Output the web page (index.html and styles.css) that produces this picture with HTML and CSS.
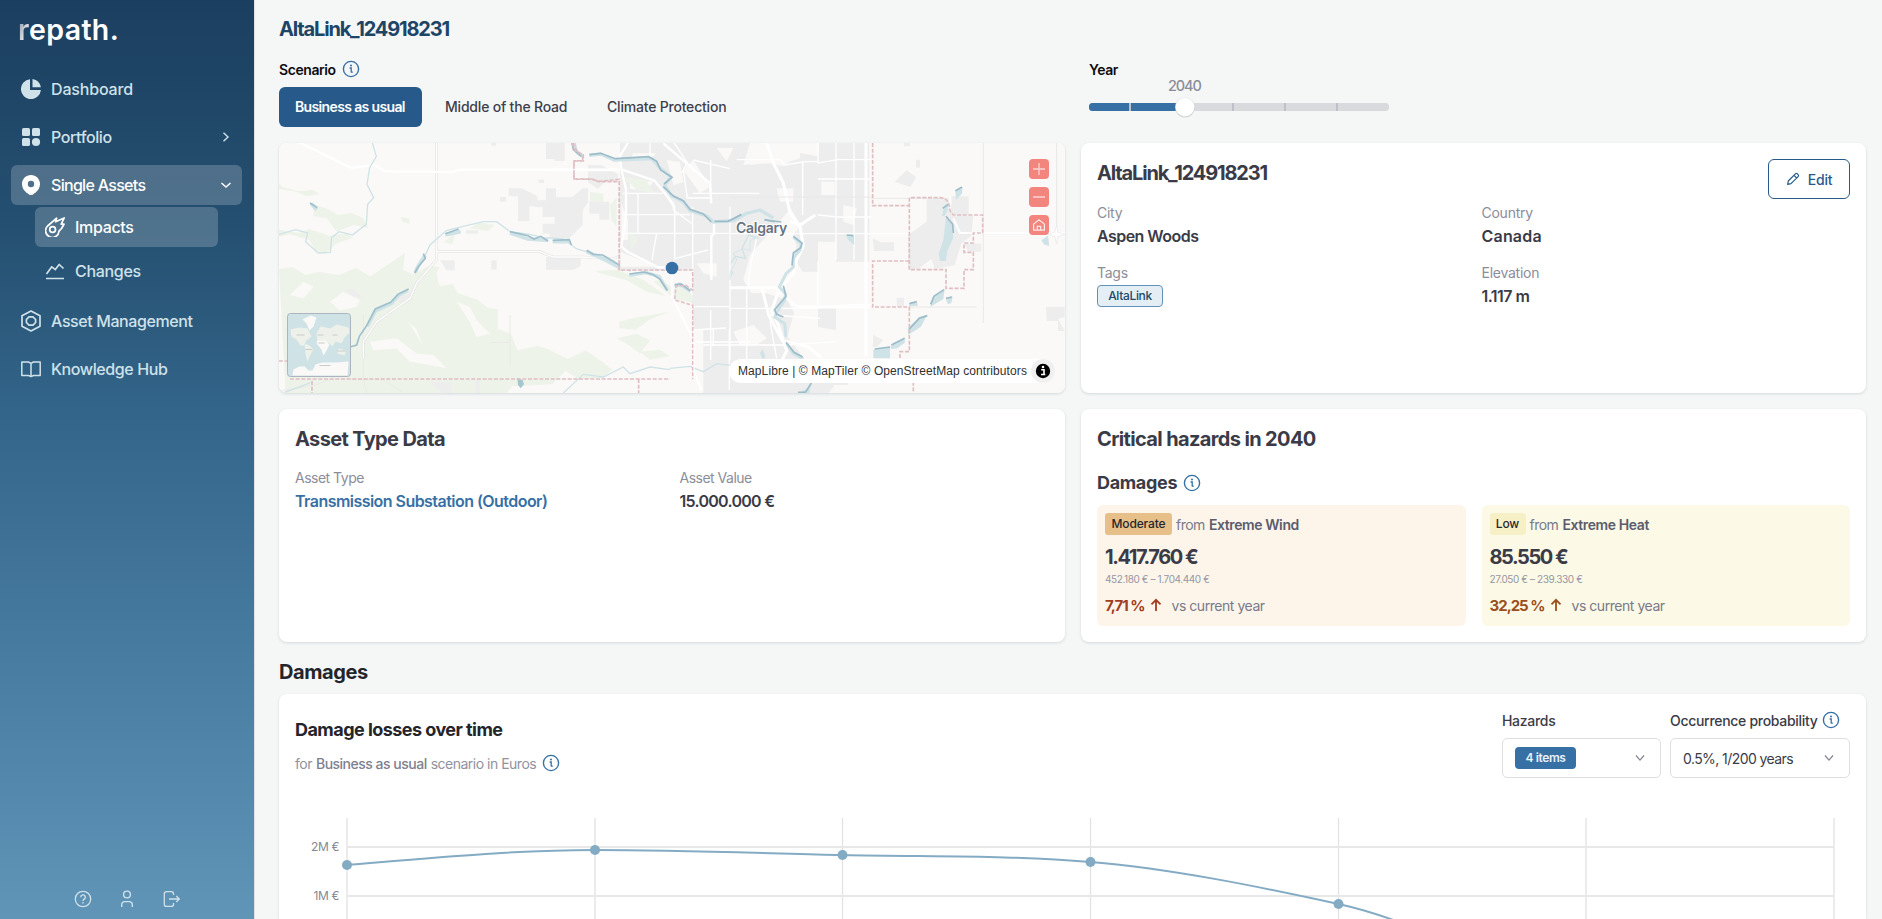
FILE: index.html
```html
<!DOCTYPE html>
<html lang="en">
<head>
<meta charset="utf-8">
<title>repath – AltaLink_124918231</title>
<link rel="stylesheet" href="styles.css">
</head>
<body>
<svg width="0" height="0" class="defs">
  <symbol id="info" viewBox="0 0 18 18"><circle cx="9" cy="9" r="7.6" fill="none" stroke="currentColor" stroke-width="1.4"/><path d="M7.600 8h1.600v4.500M9 12.200h1.800" fill="none" stroke="currentColor" stroke-width="1.300"/><circle cx="9" cy="5.500" r="1" fill="currentColor"/></symbol>
  <symbol id="up" viewBox="0 0 12 14"><path d="M6 13V2M1.5 6.3L6 1.8l4.5 4.5" fill="none" stroke="currentColor" stroke-width="1.8"/></symbol>
  <symbol id="down" viewBox="0 0 10 8"><path d="M1 1.5l4 4.6 4-4.6" fill="none" stroke="currentColor" stroke-width="1.2"/></symbol>
</svg>
<div class="app">
  <aside class="sidebar">
    <div class="logo"><span class="logo-r">r</span><span>epath.</span></div>
    <nav class="nav">
      <a class="item dash"><svg class="ico" viewBox="0 0 20 20"><path d="M9 0.2A10 10 0 1 0 19.9 11H9z" fill="currentColor"/><path d="M11.500 0v8.300h8.300C19.300 4 16 .7 11.500 0z" fill="currentColor"/></svg><span>Dashboard</span></a>
      <a class="item"><svg class="ico" viewBox="0 0 20 20" fill="currentColor"><rect x="1" y="1" width="8" height="8" rx="1.6"/><rect x="11" y="1" width="8" height="8" rx="1.6"/><rect x="1" y="11" width="8" height="8" rx="1.6"/><circle cx="15" cy="15" r="4.1"/></svg><span>Portfolio</span><svg class="caret" viewBox="0 0 12 12"><path d="M3.5 1.8L8 6l-4.500 4.200" fill="none" stroke="currentColor" stroke-width="1.4"/></svg></a>
      <a class="item active single"><svg class="ico" viewBox="0 0 20 20"><path fill="currentColor" fill-rule="evenodd" d="M10 0c5 0 9 4 9 8.900 0 4.500-3 7.500-5.500 9.400-1.200.9-2.200 2-3.500 2s-2.300-1.100-3.500-2C4 16.400 1 13.400 1 8.900 1 4 5 0 10 0zm0 5.800a3.200 3.200 0 1 0 0 6.400 3.200 3.200 0 0 0 0-6.400z"/></svg><span>Single Assets</span><svg class="caret" viewBox="0 0 12 12"><path d="M1.500 4l4.500 4 4.500-4" fill="none" stroke="currentColor" stroke-width="1.500"/></svg></a>
      <a class="item sub active"><svg class="ico" viewBox="0 0 20 20" fill="none" stroke="currentColor" stroke-width="1.700" stroke-linejoin="round"><path d="M2.600 9L11.600 1.200 10.600 4.800 19.200 .9 16.200 7.200 19 7.200 16.500 11.500 14 14.200A6.700 6.700 0 1 1 2.600 9z"/><circle cx="7.600" cy="12.500" r="2.900"/></svg><span>Impacts</span></a>
      <a class="item sub"><svg class="ico" viewBox="0 0 20 20" fill="none" stroke="currentColor" stroke-width="1.700" stroke-linejoin="round"><path d="M1.500 13l5.300-7.200 3.500 2.800L14.200 3.500 18.500 7.500M1 17.500h18"/></svg><span>Changes</span></a>
      <a class="item gap"><svg class="ico tall" viewBox="0 0 20 22" fill="none" stroke="currentColor" stroke-width="1.700" stroke-linejoin="round"><path d="M10 1l9 4.800v10.400L10 21 1 16.200V5.800z"/><path d="M8 6.800h4l2.600 2.700v3L12 15.200H8l-2.600-2.700v-3z"/></svg><span>Asset Management</span></a>
      <a class="item"><svg class="ico" viewBox="0 0 20 20" fill="none" stroke="currentColor" stroke-width="1.500" stroke-linejoin="round"><path d="M.8 3h6.700L10 4.300 12.500 3h6.700v13.500h-6.700L10 17.600 7.500 16.500H.8zM10 4.300v13.300"/></svg><span>Knowledge Hub</span></a>
    </nav>
    <div class="tools">
      <svg viewBox="0 0 18 18" fill="none" stroke="currentColor" stroke-width="1.300"><circle cx="9" cy="9" r="7.700"/><path d="M6.700 7.200a2.300 2.300 0 1 1 3.300 2c-.8.400-1 .8-1 1.700"/><path d="M9 12v1.400"/></svg>
      <svg viewBox="0 0 18 18" fill="none" stroke="currentColor" stroke-width="1.400"><circle cx="9" cy="4.500" r="3.400"/><path d="M3.700 17v-2c0-2.200 1.200-3.400 3.300-3.400h4c2.100 0 3.300 1.200 3.300 3.400v2"/></svg>
      <svg viewBox="0 0 18 18" fill="none" stroke="currentColor" stroke-width="1.300"><path d="M11.500 5V3.800c0-1.500-.6-2.200-2-2.200h-5C3 1.600 2.300 2.300 2.300 3.800v10.400c0 1.500.7 2.200 2.200 2.200h5c1.400 0 2-.7 2-2.200V13M7 9h10M14.300 6l3 3-3 3"/></svg>
    </div>
  </aside>
  <main class="main">
    <h1 class="page-title">AltaLink_124918231</h1>
    <div class="controls">
      <section class="scenario">
        <div class="label"><span>Scenario</span><svg class="info"><use href="#info"/></svg></div>
        <div class="tabs"><button class="tab on">Business as usual</button><button class="tab t2">Middle of the Road</button><button class="tab t3">Climate Protection</button></div>
      </section>
      <section class="year">
        <div class="label"><span>Year</span></div>
        <div class="slider"><div class="year-value">2040</div>
          <svg class="track" viewBox="0 0 300 24"><rect y="8" width="300" height="8" rx="3.500" fill="#d9dade"/><path d="M3.500 8H96v8H3.500A3.500 3.500 0 0 1 0 12.500v-1A3.500 3.500 0 0 1 3.500 8z" fill="#3670a5"/><path d="M41 8v8M144 8v8M196 8v8M248 8v8" stroke="#bfc1c9" stroke-width="2"/><circle cx="96" cy="12.600" r="10" fill="#d3d6d8"/><circle cx="96" cy="12" r="9.300" fill="#fff"/></svg>
        </div>
      </section>
    </div>

    <div class="grid">
      <section class="card map">
        <svg class="map-art" viewBox="0 0 786 250">
          <rect width="786" height="250" fill="#faf9f7"/>
          <g transform="translate(-9 -8) scale(.33333)">
            <g fill="#eef3e9">
              <path d="M27 145l12 12 50 12 40-5 20 14-40 6-30-14-52-8zM130 208l44 14 30 18 40-6 34 14 18 32-46-10-50 20-30-40-40-6zM27 284l60 10 30-12 60 20 50-6 22 12-52 18-30 30-30-10-20-32-60-16-30 8zM392 246l24 4 4 16-22-4z"/>
              <path d="M27 402l40-6 40 24 40-10 60 10 50-22 44 26 60-40 44-30-6 50 30 14 50-26 30 4-10 18 10 40 40-8 14 28 60 20 30 24 30 4v60l40 14 20 50 60-14 30 10 60 30 54-26 50 34 30 24-30 24-70 6-40-26-40 40-120 6-20 24-660 1z"/>
              <path d="M520 322l34-26-6 32zM600 280l30-18 44 8-20 18zM960 170l40 6v40l-26 10-14-30zM1020 210l20-24v90l-16-20zM980 408l60-4 80 30 70 50-60-14-60-34-90-24zM1048 560l40-10 110-20-60 24-40 30-50-4zM1040 610l60-14 40 20-30 40-40-30zM1110 650l60-6 30 20-60 10zM1090 130l60 34-40 10-24-20z"/>
            </g>
            <g fill="#faf9f7"><path d="M60 480l40-40 30 16-30 34zM180 500l40-30 50 26-10 20-50 10zM560 500l40 16 20 40 40 40-40 10-20-44zM300 620l80-10 60 46 50 4 40 40-50-10-60-10-40-40-70 6zM414 560l24 20 20 50-24-40z"/></g>
            <g fill="#ededed">
              <path d="M828 24h56v54h-30v-6h-26zM716 160h40l46 24v30h-24v44h-34v-74h-28zM806 134h16v10h-16zM690 186h18v14h-18zM828 160h30v26h50l30-26h16v40h64v54h-30v-18h-30v-40l-20 30v44l-40 40h-60v-14h-20v-30h36v-20h-36v-30h-24v-20h34zM510 376h44v30h-24zM664 376h16v28h-16zM828 366h104v26l-20 12h-84zM588 286h36v10h-36zM664 24h14v8h-14zM954 90h40l50 28v24h-40l-20 20-30-20zM480 740h64v34h-28zM225 465l24-4 30 28-30-6zM384 480h30l20-34 6 10-16 34-20 10h-20zM616 736h14v38h-14z"/>
            </g>
            <path d="M27 768l100-16 60-20 150 2 60 36M280 540v190l10 44M720 540v154M660 622h60" fill="none" stroke="#e9e9e7" stroke-width="3"/>
            <path d="M500 24v350l-60 70-20 46-100 70-40 60v50M500 350h310l40 16h90l90 6 30-14" fill="none" stroke="#e3e3e3" stroke-width="8"/>
            <path d="M500 24v350l-60 70-20 46-100 70-40 60v50M500 350h310l40 16h90l90 6 30-14" fill="none" stroke="#fff" stroke-width="4"/>
            <path d="M84 20l150 74 12 4 68-8 30 18 40 2h100l60 2 24-8h490" fill="none" stroke="#fff" stroke-width="7"/>
            <path d="M27 298l50-14 36 10-6 26 38 34 36-2 4-44 22-18 40 10 42-32 4-60 18-20-20-40 8-50 20-34-12-40M466 360l14-30 50-44 50-12 60-14h40l40 30 60 8 40 10 60 4 40 30 50 14 36 14 54 30 22 8M880 774l60-56 60 8 60-30 20 20 60-20 60 8M40 774l80-30" fill="none" stroke="#cfe3e7" stroke-width="4"/>
            <g fill="none" stroke="#cfe3e7" stroke-width="11" stroke-linejoin="round"><path d="M912 24l6 24 20 16M526 300l46-10M848 320h52M720 294l54 18 60 4M950 350l50 22 60 32M466 360l-22 34-8 18M414 466l-28 14-20 24-50 24-24 46M124 206l16 18"/></g>
            <path d="M906 24l4 20 24 20M526 296l40-14M848 316l50-2 6 16M720 290l54 12 18 10 20-8 22 14M950 346l20 12 28 2 30 18 20 12 20 12M460 356l6 14-20 24-12 20M416 462l-32 16-22 24-46 20-26 50-22 32-8 26-20 6M120 204l22 14" fill="none" stroke="#9ebfcb" stroke-width="5"/>
            <path d="M742 728l16 8 4 12-10 12-8-10z" fill="#a5c6d0"/>
            <path d="M906 24l10 24 24 12v18h-28v54h54l20 8h62v264h150M60 732h1140M126 738v36M1106 732v42M27 678h24" fill="none" stroke="#e0bfc3" stroke-width="5" stroke-dasharray="12 5"/>
          </g>
          <g transform="translate(391 -8) scale(.33333)">
            <g fill="#ededed">
              <path d="M0 24h240l-20 66 60-8 60 12 50-40 54 10 2-40h152v356H498v-60h-54v90h-46l-50-80 44-60-30-50-50 60-10 70-50 90 20 30 80 24 20 40-20 70 60 80 60 10 20 60-50 60H100V524l-34-40V406H0z"/>
              <path d="M674 140l36-34 28 20-16 30zM738 74h12v24h-12zM702 24h18v10h-18zM770 190h70l10 50 60 2-6 60-30 24-20 64-60 12-10-30-40 30h-30V300l56-40zM608 310l24 12h40v26h-60zM884 326h50v24h-40zM844 184h52v56h-50zM1128 516h56v30l-20 6 20 36h-20v-30h-34zM444 516h54v70l-54-10zM610 600l30 16-20 20h-12zM444 690h90v60h-90zM680 488h22v26h-22z"/>
            </g>
            <g fill="#faf9f7"><path d="M240 360l70-80 60 24 10 30-20 60-30 50-10 30h-76l-24-40zM70 30l50 20 60 50-40-6-60-30zM190 590l60-20 40 40-30 20h-50zM320 160h50v40h-40zM454 140h40v40h-40zM520 210l40 10-10 50-30-10zM240 40l40 4 20 40-60 6zM320 30h70v40l-50 16z"/></g>
            <g fill="none" stroke="#fff" stroke-width="4"><path d="M178 24v740M444 24v60l60-10h100M498 24v350M552 24v350M398 80v160M444 296h160M0 296h720M100 520h350M76 580l100-6M100 630h250l150-10M230 460v230M444 380v130M444 516l110-8h54M444 132h156M260 310l-20 90-6 60M200 74h130l14 16 60-10h40M444 700h60M130 574v60M300 540l150 10M444 240l60 6h100M300 560l20 110"/></g>
            <g fill="none" stroke="#fff" stroke-width="9"><path d="M588 24v640M290 24l20 60 30 60 20 90 30 40 10 60-20 40-10 40-46 60-20 54 20 40 26 80-30 60M60 406l40 30 70 22h150l50 50 20 8h210M276 460l20 80 40 76 80 20 36 30M360 260l30 10 46-30"/></g>
            <path d="M120 186h484M1160 24v250M604 190h226M870 296h314M940 24v540M720 516h200" fill="none" stroke="#e8e8e7" stroke-width="3"/>
            <path d="M850 250l20 44h320M840 190v36" fill="none" stroke="#fff" stroke-width="6"/>
            <path d="M1160 270l4 22 22 6-22 6-4 22-6-22-20-6 20-6z" fill="#fff" stroke="#e5e5e5" stroke-width="2"/>
            <path d="M266 310l-30-10-20 40 10 30-30-6-20 30 12 20-10 14M0 700l60-6 40 16 40-24 50 6" fill="none" stroke="#cfe3e7" stroke-width="4"/>
            <path d="M370 306l24 20-4 20-20 22v28l-22 20-20 40 18 20-2 20-20 30-10 20 30 20 4 40M350 626l20 30 30 16" fill="none" stroke="#cfe3e7" stroke-width="9"/>
            <g fill="#cfe3e7"><path d="M62 488l30-6 32 20 40-44 8 16-30 30 0 10 26 2v18l-20 4-40-4-40-26zM150 434l20-2 4 20-20-6zM828 244l18 24 4 40-18 40-4 30h-18l-4-22 14-40zM822 216l14-8-4 20-8 14-8 2zM856 172l22-16-2 20-18 18zM780 516l14-30 30-24-4 30-26 16zM828 494l20-10-4 20-10 4zM714 600v-22l34-32 24-6-20 36zM610 644l50-10v36h-50zM662 634l40-26 4 14-24 18-18 2zM718 508l22-10 4 14-26 2zM528 300l24 2v28l-18-16zM1114 316l20-14 4 30-14-2zM270 654l8-12 8 22-8 10zM384 774l30-14 10-16-6 30z"/></g>
            <path d="M140 262l36-2 38-22M284 254l30 6M370 304l26 20-4 14-22 16-4 38M340 452l8 32-34 40 6 14 20 8M348 622l24 30 26 14M18 456l16-6 24 16M64 488l30-4 32 16 34-40M140 514l24 4M828 244l20 24 2 26M818 220l16-12M856 168l20-12M782 508l10-24 30-20M718 582l30-32 24-8M614 642l46-6M664 630l40-20M718 506l22-6M828 490l18-4M530 300l20 2M384 772h22l18-28M154 436l16-4" fill="none" stroke="#9dbcc9" stroke-width="5"/>
            <path d="M608 24v188h110M718 404V188h92c20 0 30 16 30 40l10 12h88v54h-28v30h-28v28h28v52h-28v56h-54v-56zM718 378H608v138h110v134h-28v24M730 740v34" fill="none" stroke="#e0bfc3" stroke-width="5" stroke-dasharray="12 5"/>
          </g>
          <g transform="translate(271 -3) scale(.33333)">
            <path d="M210 8h330v560H428V390H210z" fill="#ededed"/>
            <path d="M212 380v-44l110 44zM214 190l20 50v60h-20zM250 40h70l-20 20h-60zM350 60l40 6 10 60-30 10-10-40zM430 60l50 80-30 20-50-70zM440 370h60v40l-40-10zM240 124l70 0-20 30-50-8zM380 390h48v90l-50-20zM500 24h50l-20 40z" fill="#faf9f7"/>
            <path d="M220 110l70 10 20 40-50-10zM240 270l24 30-20 30zM374 440l24-6 30 34v20l-54-10zM330 420l40 24v30l-60-50z" fill="#eef3e9"/>
            <path d="M220 224h200M264 160v120M218 280h320M374 200v160M300 10v40M428 200v200M320 130l50 60v20l60 44M400 90l12 84 68 0M372 8l40 60-16 30M430 60l110 26M374 356l100-26M540 200v460M482 60v110M218 160h120M320 280l-14 80M428 160h200M428 500h110M428 570l100-6M432 606h170M482 510v150M492 250l48-6" fill="none" stroke="#fff" stroke-width="4"/>
            <path d="M234 8l-24 40 4 40 14 60v80l-14 92 20 16 90 46h50M214 88l100 34 40 50 20 30M340 10l140 120 4 60M492 250v30l-8 10v130M366 400v70l40 80 24 50v90l24 60M0 90h210" fill="none" stroke="#fff" stroke-width="7"/>
            <path d="M118 46l34-4 40 18 114-4 20 24 36 30-18 26 20 30 36 20 20 26 50 16 20 18 60-4 40-22 40-10 40 24M238 406l50-8 40 12 24 40M374 440l14-8 34 22" fill="none" stroke="#cfe3e7" stroke-width="10" stroke-linejoin="round"/>
            <path d="M118 44l34-4 44 16 100-6 24 14 12 26 34 22-24 20M340 140l30 28 30 14 20 26 40 14 24 24M494 244h40l40-20M238 402l44-6 28 8 20 14 22 34M374 434l20-2 26 20M644 240l50 6" fill="none" stroke="#9dbcc9" stroke-width="5"/>
            <path d="M540 420v-20l20-40-10-20 30-14 20 6 0-30 40-20" fill="none" stroke="#d5e6e9" stroke-width="3"/>
            <path d="M70 8l10 24 18 14v16H72v56h54l20 6 62-6v272h220v60l-20-14-30 2-4 42 54 16v222" fill="none" stroke="#e0bfc3" stroke-width="4.500" stroke-dasharray="12 5"/>
          </g>
          <text x="457" y="89.500" class="city">Calgary</text>
          <circle cx="393" cy="125" r="6.300" fill="#3670a5"/>
          <g transform="translate(8.500 170.500)"><rect width="63" height="63" rx="3" fill="#cfe3e7" stroke="#aeb4bf"/>
            <g fill="#edf1ea"><path d="M3 16l9-2 8 1 4 8-5 4-3 5-3 0-4-6-5-3zM17 30l5 2 4 4-3 5-3 7-2-8zM29 20l4-7 10 2 6-4 12 3 1 5-5 5-3 6-6-2-3 5-4-4-5 1-6-1zM51 35l8 2-2 5-7-2z"/></g>
            <path d="M15 6l8-4 6 2-3 9-4 4-3-7zM30 27h8l4 4-4 8-2 3-2-6-5-6z" fill="#faf9f7"/>
            <path d="M5 62l1-6 6-3 5 0 4 4 4 0 3-6 7-2 14 0 12-1-1 14z" fill="#faf9f7"/>
            <g fill="none" stroke="#c9ccc9"><path d="M9 21.500h8M30 21.500h6M45 21.500h5M18 36h7M31 29.500h6M50 37.500h9M32 52h11"/></g></g>
        </svg>
        <div class="map-buttons">
          <svg viewBox="0 0 20 20"><path d="M10 4v12M4 10h12" stroke="#fbd5d3" stroke-width="1.300"/></svg>
          <svg viewBox="0 0 20 20"><path d="M4 10h12" stroke="#fbd5d3" stroke-width="1.300"/></svg>
          <svg viewBox="0 0 20 20" fill="none" stroke="#fdeae9" stroke-width="1.200"><path d="M4.600 9v6.200h10.800V9M4 9.600L10 4.800l6 4.800M8.300 15v-3.700h3.400V15"/></svg>
        </div>
        <div class="attrib"><span>MapLibre | © MapTiler © OpenStreetMap contributors</span><svg viewBox="0 0 24 24"><circle cx="12" cy="12" r="12" fill="#f0f0f0"/><circle cx="12" cy="12" r="7.200"/><path d="M10.200 10.700H13v4.500M10 15.500h4.300" stroke="#fff" stroke-width="1.600" fill="none"/><circle cx="12" cy="8" r="1.300" fill="#fff"/></svg></div>
      </section>

      <section class="card asset">
        <div class="card-head"><h2 class="asset-name">AltaLink_124918231</h2><button class="edit"><svg viewBox="0 0 14 14" fill="none" stroke="currentColor" stroke-width="1.200" stroke-linejoin="round"><path d="M1.700 12.300l.6-3.300L9.400 1.900c.6-.6 1.400-.6 2 0l.7.7c.6.6.6 1.400 0 2L5 11.700zM8 3.300L10.700 6"/></svg><span>Edit</span></button></div>
        <dl class="facts">
          <div><dt>City</dt><dd>Aspen Woods</dd></div>
          <div><dt>Country</dt><dd class="country">Canada</dd></div>
          <div><dt>Tags</dt><dd class="tag">AltaLink</dd></div>
          <div><dt>Elevation</dt><dd>1.117 m</dd></div>
        </dl>
      </section>

      <section class="card type">
        <h2>Asset Type Data</h2>
        <dl class="facts">
          <div><dt>Asset Type</dt><dd class="link">Transmission Substation (Outdoor)</dd></div>
          <div><dt>Asset Value</dt><dd class="value">15.000.000 €</dd></div>
        </dl>
      </section>

      <section class="card critical">
        <h2>Critical hazards in 2040</h2>
        <h3><span>Damages</span><svg class="info"><use href="#info"/></svg></h3>
        <div class="hazards">
          <div class="hazard wind">
            <div class="from"><b class="badge">Moderate</b><span>from</span><strong>Extreme Wind</strong></div>
            <div class="amount">1.417.760 €</div>
            <div class="range">452.180 € – 1.704.440 €</div>
            <div class="trend"><b>7,71 %</b><svg><use href="#up"/></svg><span>vs current year</span></div>
          </div>
          <div class="hazard heat">
            <div class="from"><b class="badge">Low</b><span>from</span><strong>Extreme Heat</strong></div>
            <div class="amount">85.550 €</div>
            <div class="range">27.050 € – 239.330 €</div>
            <div class="trend"><b>32,25 %</b><svg><use href="#up"/></svg><span>vs current year</span></div>
          </div>
        </div>
      </section>
    </div>

    <h2 class="section-title">Damages</h2>
    <section class="card chart-card">
      <div class="chart-head">
        <div class="chart-title"><h3>Damage losses over time</h3><p><span>for</span><b>Business as usual</b><span>scenario in Euros</span><svg class="info"><use href="#info"/></svg></p></div>
        <div class="filters">
          <div class="field hz"><label>Hazards</label><div class="select"><b>4 items</b><svg><use href="#down"/></svg></div></div>
          <div class="field occ"><label><span>Occurrence probability</span><svg class="info"><use href="#info"/></svg></label><div class="select"><i>0.5%, 1/200 years</i><svg><use href="#down"/></svg></div></div>
        </div>
      </div>
      <svg class="chart" viewBox="0 0 1555 101">
        <path d="M52 0v101M300 0v101M547.500 0v101M795.500 0v101M1043.500 0v101M1291 0v101M1539 0v101" stroke="#e2e2e2" stroke-width="1.300" fill="none"/>
        <path d="M52 29H1539M52 78H1539" stroke="#e8e8e8" stroke-width="1.800"/>
        <path d="M52 47C135 40 217 32 300 32C382 32 465 35 547.500 37C630 39 713 37 795.500 44C878 51 961 68 1043.500 86C1126 104 1200 150 1291 180" fill="none" stroke="#84abc4" stroke-width="2"/>
        <g fill="#84abc4"><circle cx="52" cy="47" r="5"/><circle cx="300" cy="32" r="5"/><circle cx="547.500" cy="37" r="5"/><circle cx="795.500" cy="44" r="5"/><circle cx="1043.500" cy="86" r="5"/></g>
        <text x="44" y="33" text-anchor="end">2M €</text><text x="44" y="82" text-anchor="end">1M €</text>
      </svg>
    </section>
  </main>
</div>
</body>
</html>
```
FILE: styles.css
```css
* { box-sizing: border-box; }
body { margin: 0; background: #f5f7f7; font-family: Inter, "Open Sans", sans-serif; font-size: 14px; color: #3a3b47; }
h1, h2, h3, p, dl, dd, dt { margin: 0; }
button { font: inherit; border: 0; background: none; padding: 0; }
.defs { position: absolute; }
.app { display: flex; height: 919px; overflow: hidden; }

.sidebar { width: 255px; flex: none; display: flex; flex-direction: column; border-right: 1px solid #dfe0e4; background: linear-gradient(#1b3f60 0%, #255071 25%, #33658a 45%, #4b7fa3 75%, #6095b8 100%); color: #cfe2ea; }
.logo { height: 69px; padding: 12px 0 0 18px; font-size: 28.500px; line-height: 36px; font-weight: 600; letter-spacing: .35px; color: #fff; }
.logo-r { background: linear-gradient(110deg, #8c9dae 20%, #fff 80%); -webkit-background-clip: text; color: transparent; }
.nav { padding: 0 12px 0 11px; display: flex; flex-direction: column; flex: 1; }
.item { display: flex; align-items: center; height: 40px; margin-bottom: 8px; padding: 0 10px; border-radius: 6px; font-size: 16px; font-weight: 500; letter-spacing: -.4px; }
.item.dash { letter-spacing: -.17px; }
.item.single { letter-spacing: -.7px; }
.item.active { background: rgba(255, 255, 255, .2); color: #fff; margin-bottom: 2px; }
.item.sub { margin: 0 24px 4px; letter-spacing: -.32px; }
.item.gap { margin-top: 6px; }
.ico { width: 20px; height: 20px; margin-right: 10px; flex: none; }
.ico.tall { height: 22px; }
.caret { width: 12px; height: 12px; margin-left: auto; }
.tools { display: flex; justify-content: center; gap: 26px; padding-bottom: 11px; }
.tools svg { width: 18px; height: 18px; }

.main { flex: 1; height: 919px; overflow: hidden; padding: 14px 16px 0 24px; min-width: 0; }
.page-title { font-size: 20px; line-height: 31px; height: 30px; font-weight: 700; letter-spacing: -1.170px; color: #1c4566; }
.controls { display: flex; height: 99px; padding-top: 15px; }
.scenario { width: 810px; }
.label { display: flex; align-items: center; gap: 6px; height: 20px; font-size: 14px; font-weight: 600; letter-spacing: -.42px; color: #0c0c10; }
.info { width: 18px; height: 18px; color: #3670a5; flex: none; }
.tabs { display: flex; margin-top: 8px; }
.tab { height: 40px; line-height: 40px; font-weight: 500; letter-spacing: -.2px; color: #3e3f4b; text-align: left; white-space: nowrap; }
.tab.on { width: 143px; padding-left: 16px; background: #275a8a; color: #fff; border-radius: 6px; font-weight: 600; letter-spacing: -.640px; }
.t2 { margin-left: 23px; width: 162px; }
.slider { width: 300px; }
.year-value { height: 16px; line-height: 13px; padding-left: 79px; font-size: 14.500px; font-weight: 500; letter-spacing: -1.1px; color: #8b8d9b; }
.track { display: block; width: 300px; height: 24px; overflow: visible; }

.grid { display: grid; grid-template-columns: 786px 785px; grid-template-rows: 250px 233px; gap: 16px; }
.card { background: #fff; border-radius: 8px; box-shadow: 0 1px 3px rgba(40, 60, 60, .16); padding: 16px; }
.card h2 { font-size: 20px; line-height: 29px; height: 28px; font-weight: 700; letter-spacing: -.640px; color: #3a3b47; }
.card .asset-name { letter-spacing: -1.170px; }
.map { position: relative; padding: 0; overflow: hidden; }
.map-art { display: block; width: 786px; height: 250px; }
.city { font-size: 14px; font-weight: 600; letter-spacing: -.25px; fill: #687380; stroke: #fff; stroke-width: 2px; paint-order: stroke; }
.map-buttons { position: absolute; right: 16px; top: 16px; display: flex; flex-direction: column; gap: 8px; }
.map-buttons svg { width: 20px; height: 20px; border-radius: 4px; background: #f3857f; }
.attrib { position: absolute; right: 10px; bottom: 10px; height: 24px; width: 326px; padding-left: 9px; display: flex; align-items: center; justify-content: space-between; border-radius: 12px; background: #fff; font: 12px "Liberation Sans", sans-serif; letter-spacing: .09px; color: #303030; white-space: nowrap; }
.attrib svg { width: 24px; height: 24px; }

.card-head { display: flex; justify-content: space-between; height: 44px; }
.edit { display: flex; align-items: center; justify-content: center; gap: 8px; width: 82px; height: 40px; border: 1px solid #275a8a; border-radius: 6px; color: #275a8a; font-weight: 500; letter-spacing: -.2px; }
.edit svg { width: 14px; height: 14px; }
.facts { display: grid; grid-template-columns: 384.500px 1fr; row-gap: 12px; }
.facts dt { height: 20px; line-height: 20px; letter-spacing: -.25px; color: #8b8d9b; }
.facts dd { height: 28px; line-height: 27px; font-size: 16px; font-weight: 600; letter-spacing: -.540px; }
.facts .country { letter-spacing: .2px; }
.facts .value { letter-spacing: -.720px; }
.facts .link { color: #3670a5; }
.facts .tag { display: flex; align-items: center; justify-content: center; width: 66px; height: 22px; margin-top: 2px; border: 1px solid #5e94b9; border-radius: 4px; background: #e4eef4; color: #21496c; font-size: 12px; line-height: 20px; font-weight: 500; letter-spacing: -.35px; }
.type .facts { margin-top: 15px; }
.type .facts dt { letter-spacing: -.5px; }

.card h3 { display: flex; align-items: center; gap: 6px; font-size: 18px; line-height: 24px; font-weight: 700; letter-spacing: -.34px; }
.critical h3 { margin-top: 18px; height: 24px; }
.hazards { display: grid; grid-template-columns: 1fr 1fr; gap: 16px; margin-top: 10px; }
.hazard { height: 121px; padding: 8px; border-radius: 6px; }
.wind { background: #fdf5ea; }
.heat { background: #fcf9e6; }
.from { display: flex; align-items: center; height: 22px; gap: 4px; letter-spacing: -.5px; color: #787a8a; }
.from strong { color: #5b5d6e; font-weight: 600; letter-spacing: -.4px; }
.badge { height: 22px; line-height: 22px; width: 67px; text-align: center; border-radius: 3px; background: #e6c088; color: #25262e; font-size: 12px; font-weight: 500; letter-spacing: -.15px; }
.heat .badge { width: 36px; background: #f7efc5; }
.amount { margin-top: 8px; font-size: 20px; line-height: 29px; height: 28px; font-weight: 700; letter-spacing: -1.450px; }
.range { font-size: 10px; line-height: 16px; letter-spacing: -.4px; color: #9597a3; }
.trend { display: flex; align-items: center; height: 24px; margin-top: 6px; letter-spacing: -.45px; color: #787a8a; white-space: nowrap; }
.trend b { font-size: 15px; letter-spacing: -1px; color: #a13d21; }
.trend svg { width: 12px; height: 14px; margin: 0 9px 0 6px; color: #a13d21; }
.heat .trend b, .heat .trend svg { color: #9a4f1c; }

.section-title { margin-top: 16px; height: 36px; font-size: 20px; line-height: 29px; font-weight: 700; letter-spacing: -.4px; color: #24252a; }
.chart-card { height: 225px; border-radius: 8px 8px 0 0; }
.chart-head { display: flex; justify-content: space-between; height: 108px; }
.chart-title h3 { margin-top: 8px; letter-spacing: -.540px; color: #24252a; }
.chart-title p { margin-top: 11px; height: 20px; display: flex; align-items: center; gap: 4px; letter-spacing: -.5px; color: #9092a0; white-space: nowrap; }
.chart-title b { font-weight: 500; color: #7e808f; }
.chart-title .info { margin-left: 2px; }
.filters { display: flex; gap: 9px; }
.field label { display: flex; align-items: center; gap: 5px; height: 20px; font-weight: 500; letter-spacing: -.3px; white-space: nowrap; }
.select { margin-top: 8px; height: 40px; padding: 0 15px 0 12px; display: flex; align-items: center; justify-content: space-between; border: 1px solid #dedfe2; border-radius: 5px; }
.hz { width: 159px; }
.occ { width: 180px; }
.select svg { width: 10px; height: 8px; color: #84868f; }
.select b { width: 61px; height: 22px; line-height: 22px; text-align: center; border-radius: 4px; background: #3670a5; color: #e9f1f7; font-size: 12px; font-weight: 600; letter-spacing: -.4px; }
.select i { font-style: normal; letter-spacing: -.570px; white-space: nowrap; }
.chart { display: block; width: 1555px; height: 101px; }
.chart text { font-size: 12px; letter-spacing: -.4px; fill: #858796; }
```
